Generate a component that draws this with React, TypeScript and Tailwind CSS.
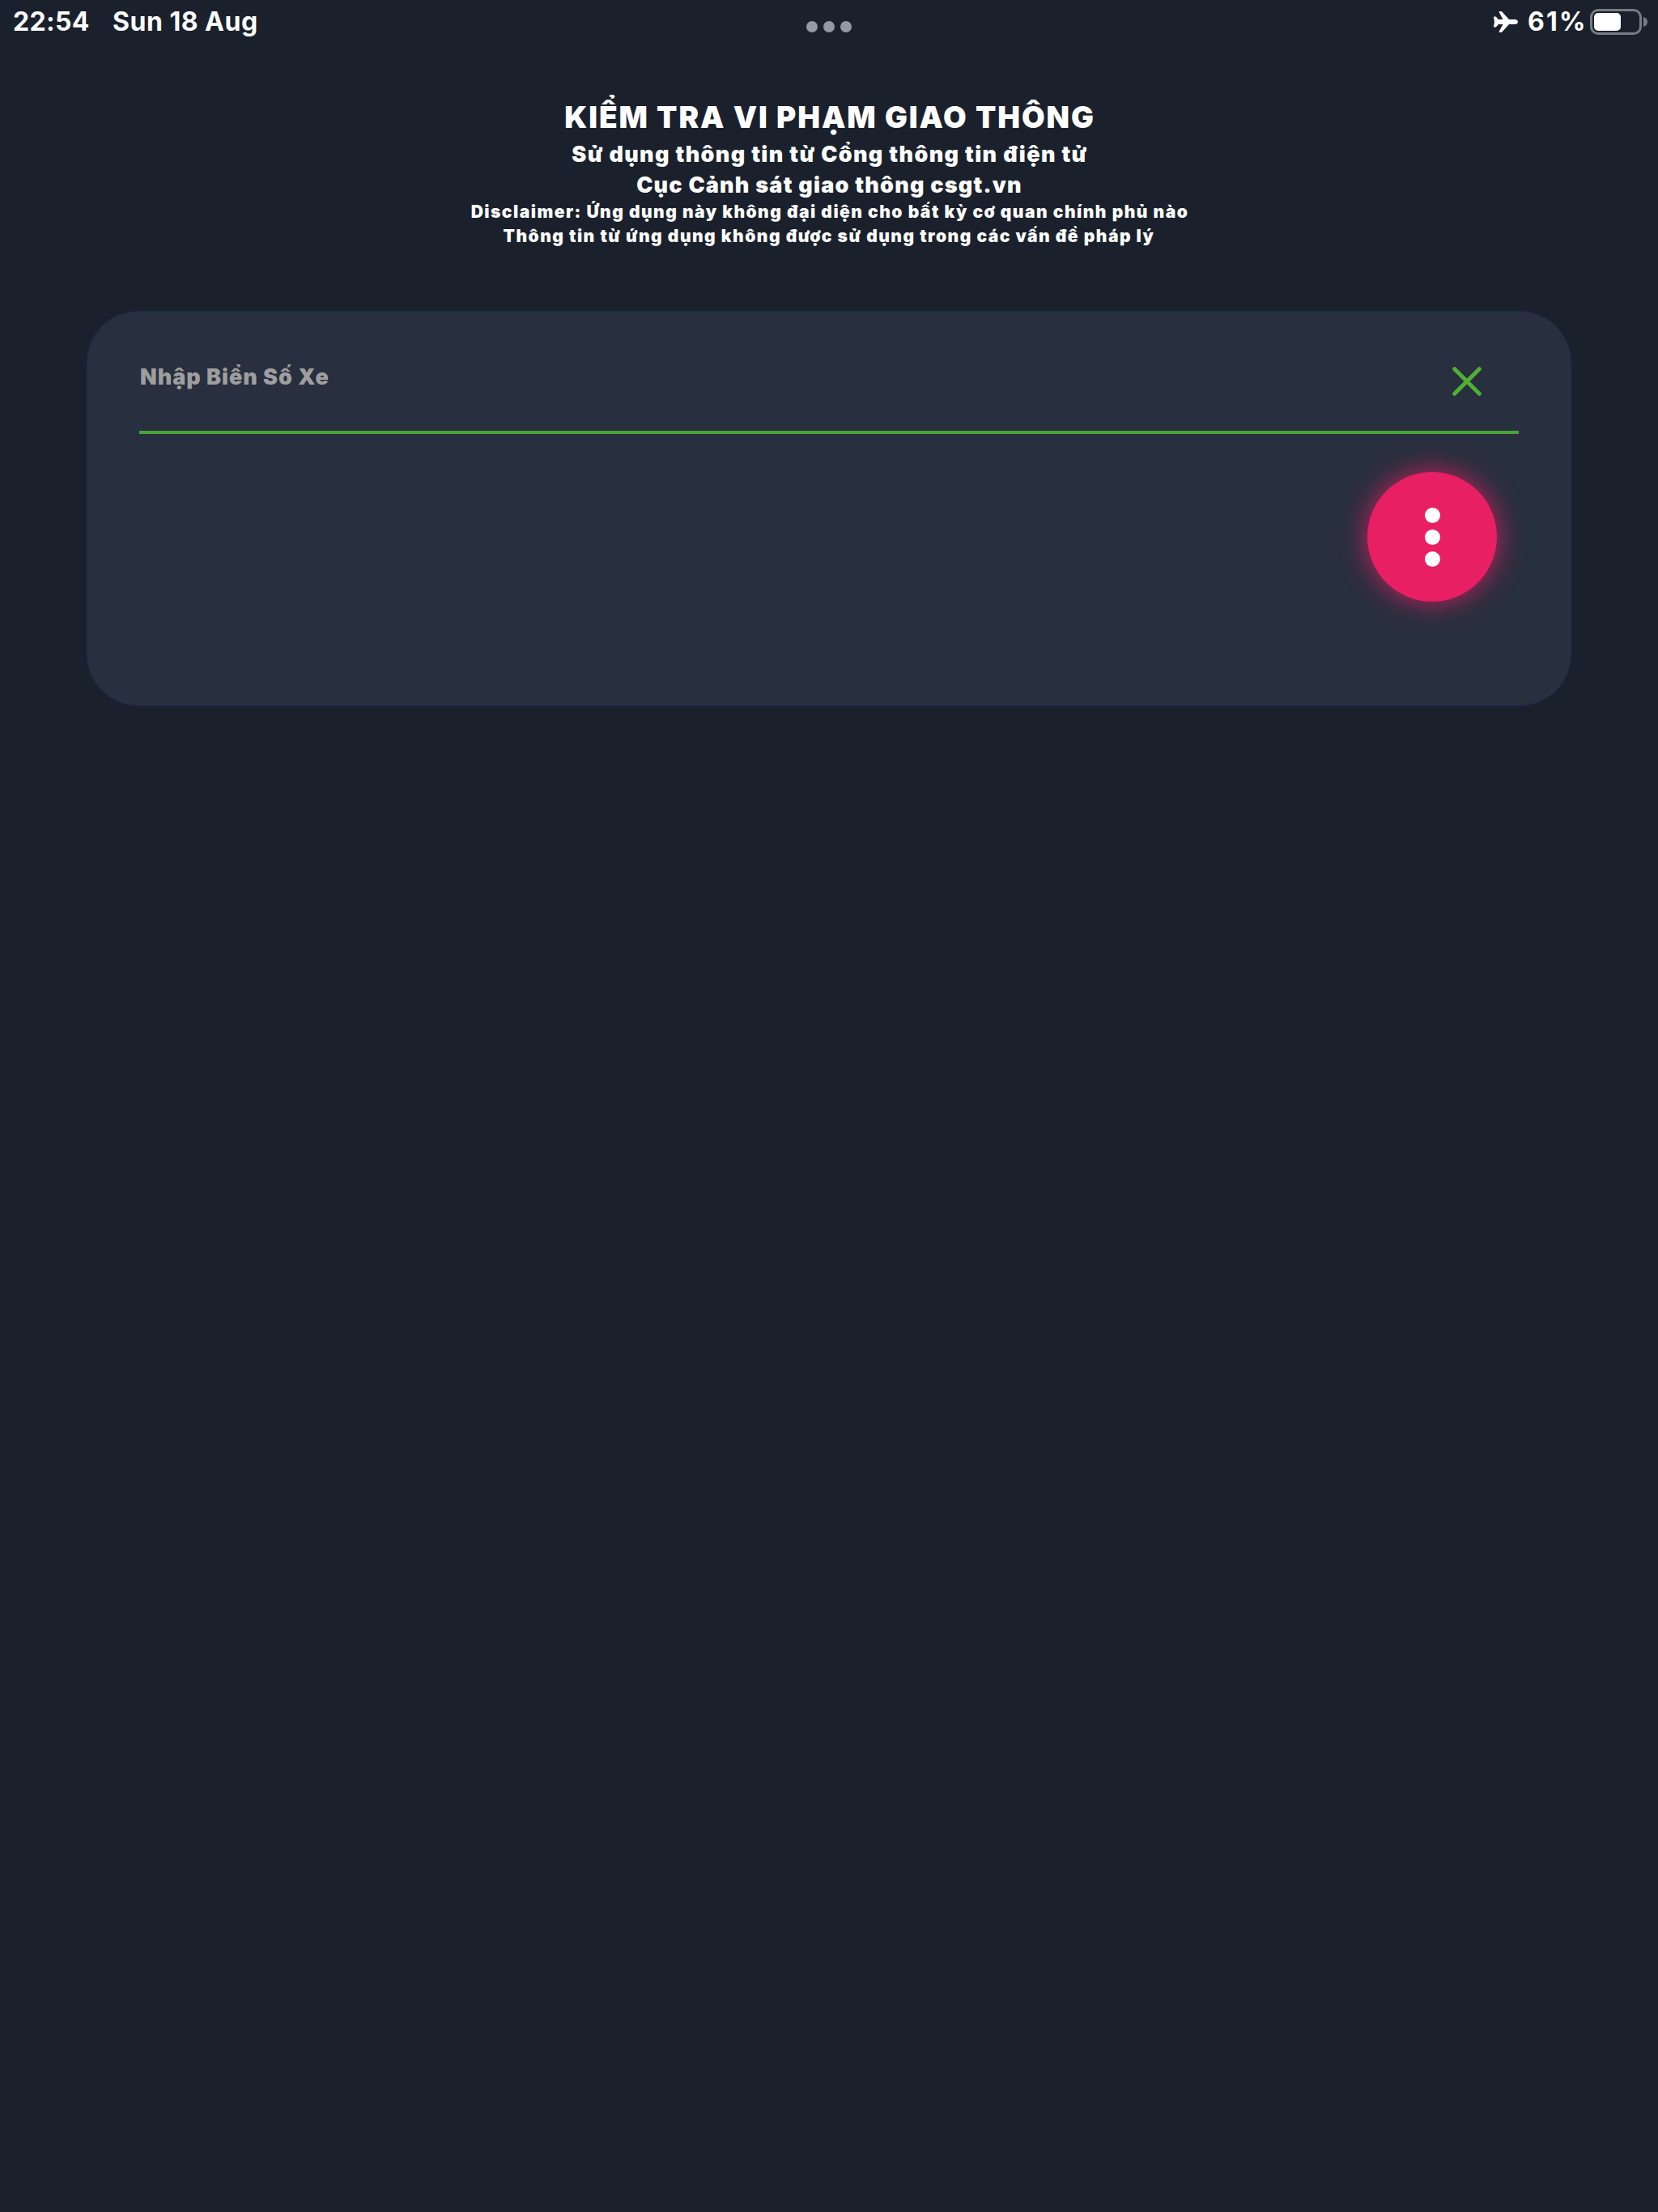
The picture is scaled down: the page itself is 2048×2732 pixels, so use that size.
const headerLines = [
  { text: 'Sử dụng thông tin từ Cổng thông tin điện tử', className: 'h-[38px] leading-[38px] text-[27px] tracking-[1.34px] pl-0.5' },
  { text: 'Cục Cảnh sát giao thông csgt.vn', className: 'h-[37px] leading-[37px] text-[27px] tracking-[1.22px] pl-px' },
  { text: 'Disclaimer: Ứng dụng này không đại diện cho bất kỳ cơ quan chính phủ nào', className: 'h-[30px] leading-[30px] text-[21px] tracking-[1.48px] pl-0.5' },
  { text: 'Thông tin từ ứng dụng không được sử dụng trong các vấn đề pháp lý', className: 'h-[29px] leading-[29px] text-[21px] tracking-[1.48px]' },
];

function StatusBar() {
  return (
    <div className="relative flex h-[53px] items-center justify-between pl-4 pr-[13px] text-[32px] font-bold leading-[53px]">
      <div className="flex items-center">
        <span className="w-[123px] tracking-[0.3px]">22:54</span>
        <span className="tracking-[0.5px]">Sun 18 Aug</span>
      </div>

      {/* Multitasking dots */}
      <div className="absolute left-1/2 top-[26px] flex -translate-x-1/2 gap-[7px]">
        <span className="size-[14px] rounded-full bg-[#9499a6]" />
        <span className="size-[14px] rounded-full bg-[#9499a6]" />
        <span className="size-[14px] rounded-full bg-[#9499a6]" />
      </div>

      <div className="flex items-center">
        <svg className="mr-3 h-[26px] w-[30px]" viewBox="0 0 30 26" fill="currentColor">
          <path d="M0 7.500q0-.9.9-.9h1.500c.5 0 .8.2 1.100.6L5.900 10h5.600L6.900 1.500C6.400.6 6.900 0 7.700 0h1.200c.7 0 1.200.2 1.700.8L19 10h6.800c2.300 0 4.200 1.300 4.200 3s-1.900 3-4.200 3H19l-8.400 9.200c-.5.6-1 .8-1.700.8H7.700c-.8 0-1.300-.6-.8-1.500L11.500 16H5.900l-2.400 2.800c-.3.4-.6.6-1.100.6H.9q-.9 0-.9-.9L1 13z" />
        </svg>
        <span className="w-[77px] tracking-[2.2px]">61%</span>
        <div className="flex h-[32px] w-[64px] rounded-[10px] border-[3px] border-[#777b84] p-0.5">
          <div className="h-[22px] w-[33px] rounded-[5px] bg-white" />
        </div>
        <svg className="ml-0.5 h-[12px] w-[5px]" viewBox="0 0 5 12" fill="#777b84">
          <path d="M0 0c3 .8 5 3.200 5 6S3 11.200 0 12z" />
        </svg>
      </div>
    </div>
  );
}

function Header() {
  return (
    <header className="flex flex-col items-center pt-[67px] font-black">
      <h1 className="h-[52px] whitespace-nowrap pl-0.5 text-[37px] leading-[50px] tracking-[1.93px]">
        KIỂM TRA VI PHẠM GIAO THÔNG
      </h1>
      {headerLines.map((line) => (
        <p key={line.text} className={`whitespace-nowrap ${line.className}`}>
          {line.text}
        </p>
      ))}
    </header>
  );
}

function SearchCard() {
  return (
    <section className="mx-[107px] mt-[78px] h-[488px] rounded-[64px] border border-[#1b2c4f] bg-[#282f3f] px-[64px]">
      <div className="flex h-[151px] items-start justify-between border-b-4 border-[#4aa436]">
        <span className="mt-[61px] pl-px text-[27px] font-black leading-[40px] tracking-[0.95px] text-[#9e9e9e]">
          Nhập Biển Số Xe
        </span>
        <button aria-label="Xóa" className="mr-[46px] mt-[68px]">
          <svg className="size-[36px]" viewBox="0 0 36 36" fill="none" stroke="#50b035" strokeWidth="5" strokeLinecap="round">
            <path d="M2.700 2.700l30.600 30.600M33.300 2.700L2.700 33.300" />
          </svg>
        </button>
      </div>

      <div className="flex justify-end pr-[27px] pt-[47px]">
        <button aria-label="Menu" className="flex size-[160px] flex-col items-center justify-center gap-2 rounded-full bg-[#e91f63] shadow-[0_0_34px_rgba(233,30,99,0.85)]">
          <span className="size-[19px] rounded-full bg-white" />
          <span className="size-[19px] rounded-full bg-white" />
          <span className="size-[19px] rounded-full bg-white" />
        </button>
      </div>
    </section>
  );
}

export default function App() {
  return (
    <div className="h-[2732px] w-[2048px] overflow-hidden bg-[#1b212c] font-['Inter',sans-serif] text-white">
      <StatusBar />
      <Header />
      <SearchCard />
    </div>
  );
}
